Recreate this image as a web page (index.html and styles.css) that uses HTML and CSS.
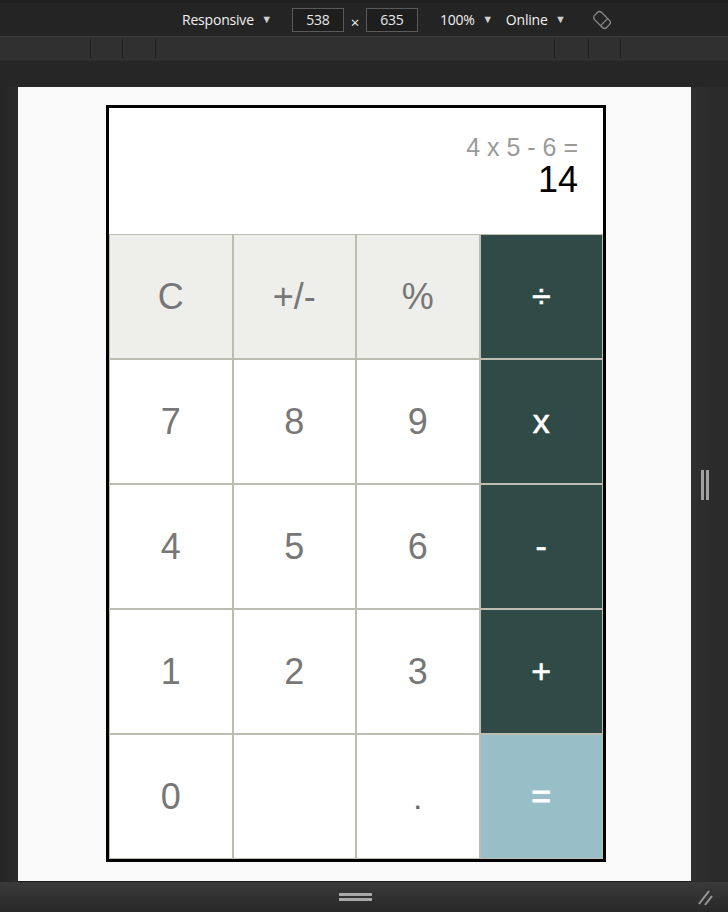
FILE: index.html
```html
<!DOCTYPE html>
<html>
<head>
<meta charset="utf-8">
<link rel="stylesheet" href="styles.css">
</head>
<body>
<div class="devtools">
  <div class="toolbar">
    <span class="tb-item">Responsive <span class="caret">▼</span></span>
    <span class="dims">
      <span class="dim-box">538</span>
      <span class="times">×</span>
      <span class="dim-box">635</span>
    </span>
    <span class="tb-item zoom">100% <span class="caret">▼</span></span>
    <span class="tb-item online">Online <span class="caret">▼</span></span>
    <svg class="rotate" width="20" height="20" viewBox="0 0 20 20">
      <g transform="rotate(-45 10 10)" fill="none" stroke="#8a8a8a" stroke-width="1.3">
        <rect x="5" y="1.5" width="10" height="17" rx="3"/>
        <line x1="5" y1="13" x2="15" y2="13"/>
      </g>
    </svg>
  </div>
  <div class="ruler">
    <span class="seg s1"></span><span class="seg s2"></span><span class="seg s3"></span>
    <span class="seg s4"></span><span class="seg s5"></span><span class="seg s6"></span>
  </div>
  <div class="stage">
    <div class="gutter-left"></div>
    <div class="viewport">
      <div class="calculator">
        <div class="display">
          <div class="expression">4 x 5 - 6 =</div>
          <div class="result">14</div>
        </div>
        <div class="keys">
          <button class="key fn">C</button>
          <button class="key fn">+/-</button>
          <button class="key fn">%</button>
          <button class="key op">÷</button>
          <button class="key">7</button>
          <button class="key">8</button>
          <button class="key">9</button>
          <button class="key op">x</button>
          <button class="key">4</button>
          <button class="key">5</button>
          <button class="key">6</button>
          <button class="key op">-</button>
          <button class="key">1</button>
          <button class="key">2</button>
          <button class="key">3</button>
          <button class="key op">+</button>
          <button class="key">0</button>
          <button class="key"></button>
          <button class="key dot">.</button>
          <button class="key eq">=</button>
        </div>
      </div>
    </div>
    <div class="gutter-right"><span class="vhandle"></span></div>
  </div>
  <div class="bottombar">
    <span class="hhandle"></span>
    <svg class="resize" width="18" height="20" viewBox="0 0 18 20">
      <line x1="3" y1="17" x2="13" y2="4" stroke="#9a9a9a" stroke-width="2"/>
      <line x1="9" y1="18" x2="16" y2="9" stroke="#9a9a9a" stroke-width="2"/>
    </svg>
  </div>
</div>
</body>
</html>
```
FILE: styles.css
```css
html, body {
  margin: 0;
  padding: 0;
  background: #262626;
}
.devtools {
  width: 728px;
  height: 912px;
  display: flex;
  flex-direction: column;
  font-family: "Open Sans", "Noto Sans", sans-serif;
}
.toolbar {
  height: 37px;
  box-sizing: border-box;
  border-top: 3px solid #1f1f1f;
  border-bottom: 1px solid #3a3a3a;
  background: #242424;
  display: flex;
  align-items: center;
  padding-left: 182px;
  color: #f0f0f0;
  font-size: 14px;
  letter-spacing: -0.2px;
}
.caret {
  font-size: 11px;
  color: #d0d0d0;
  margin-left: 4px;
  position: relative;
  top: -2px;
}
.dims {
  display: flex;
  align-items: center;
  margin-left: 20px;
}
.dim-box {
  width: 52px;
  height: 24px;
  box-sizing: border-box;
  border: 1px solid #5a5a5a;
  background: #1e1e1e;
  display: flex;
  align-items: center;
  justify-content: center;
  color: #e8e8e8;
}
.times {
  width: 22px;
  text-align: center;
  font-size: 15px;
  position: relative;
  top: 2px;
}
.zoom { margin-left: 22px; }
.online { margin-left: 13px; }
.rotate { margin-left: 26px; }
.ruler {
  height: 23px;
  background: #303030;
  position: relative;
  border-bottom: 1px solid #2a2a2a;
}
.seg {
  position: absolute;
  top: 2px;
  bottom: 2px;
  width: 1px;
  background: #1f1f1f;
}
.s1 { left: 90px; }
.s2 { left: 122px; }
.s3 { left: 155px; }
.s4 { left: 554px; }
.s5 { left: 588px; }
.s6 { left: 620px; }
.stage {
  display: flex;
  padding-top: 26px;
  background: linear-gradient(#262626, #2a2a2a);
  height: 821px;
  box-sizing: border-box;
}
.gutter-left {
  width: 18px;
  background: linear-gradient(to right, #242424, #2c2c2c);
}
.viewport {
  width: 673px;
  height: 795px;
  box-sizing: border-box;
  background: #f9f9f9;
  border-bottom: 1px solid #1c1c1c;
  padding: 18px 0 0 88px;
}
.gutter-right {
  width: 37px;
  background: linear-gradient(to right, #2e2e2e, #2a2a2a);
  display: flex;
  justify-content: center;
  align-items: center;
  padding-right: 12px;
  box-sizing: border-box;
}
.vhandle {
  width: 8px;
  height: 30px;
  box-sizing: border-box;
  border-left: 3px solid #a0a0a0;
  border-right: 3px solid #a0a0a0;
  margin-left: 2px;
}
.bottombar {
  height: 30px;
  background: linear-gradient(#3a3a3a, #282828);
  display: flex;
  align-items: center;
  justify-content: center;
  position: relative;
}
.hhandle {
  width: 33px;
  height: 8px;
  box-sizing: border-box;
  border-top: 3px solid #a8a8a8;
  border-bottom: 3px solid #a8a8a8;
  margin-left: -17px;
}
.resize {
  position: absolute;
  right: 14px;
  bottom: 5px;
}

/* Calculator */
.calculator {
  width: 500px;
  height: 757px;
  box-sizing: border-box;
  border: 3px solid #000;
  background: #fff;
  display: flex;
  flex-direction: column;
  font-family: "Liberation Sans", Arial, sans-serif;
}
.display {
  height: 126px;
  box-sizing: border-box;
  padding: 28px 25px 0 0;
  text-align: right;
}
.expression {
  font-size: 25px;
  line-height: 22px;
  color: #9a9a9a;
}
.result {
  font-size: 36px;
  line-height: 38px;
  margin-top: 3px;
  color: #000;
}
.keys {
  display: grid;
  grid-template-columns: repeat(4, 1fr);
  grid-auto-rows: 125px;
}
.key {
  border: 1px solid #bcbcb0;
  background: #fff;
  color: #777;
  font-family: "Liberation Sans", Arial, sans-serif;
  font-size: 36px;
  padding: 0;
  margin: 0;
}
.key.fn { background: #eeeeea; }
.key.op {
  background: #304a47;
  color: #fff;
  font-size: 34px;
  -webkit-text-stroke: 0.6px #fff;
}
.key.eq {
  background: #98bfc7;
  color: #fff;
  font-size: 34px;
  -webkit-text-stroke: 0.8px #fff;
}
.key.dot { padding-top: 4px; font-size: 32px; color: #666; }
```
